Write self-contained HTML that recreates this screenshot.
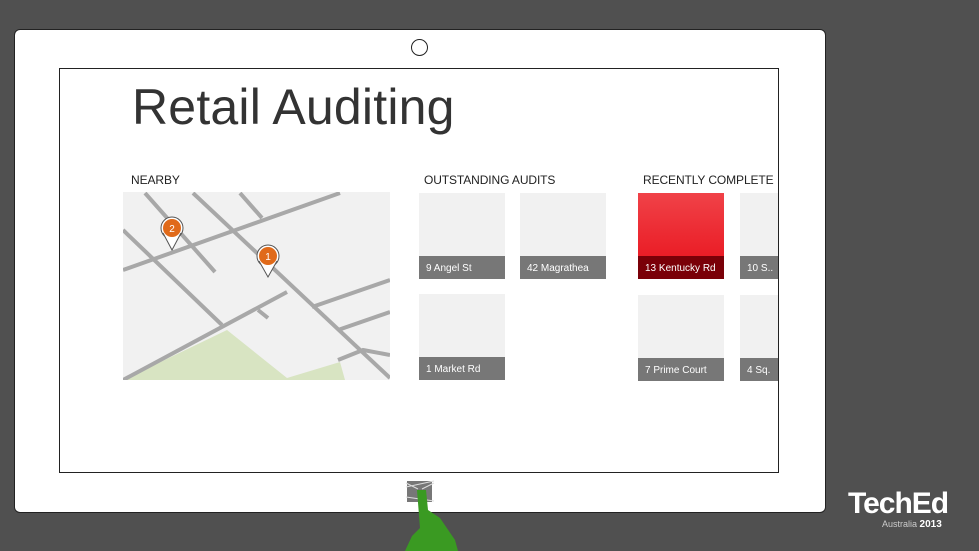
<!DOCTYPE html>
<html><head><style>
body{margin:0;width:979px;height:551px;background:#505050;position:relative;overflow:hidden;font-family:"Liberation Sans",sans-serif}
.a{position:absolute}
.tab{left:14px;top:29px;width:810px;height:482px;background:#fff;border:1px solid #222;border-radius:6px}
.scr{left:59px;top:68px;width:718px;height:403px;border:1px solid #222;background:#fff;overflow:hidden}
.h{font-size:12px;color:#222;top:173px;letter-spacing:-0.1px}
.t{background:#f1f1f1;width:86px;height:86px;overflow:hidden}
.t .l{position:absolute;left:0;bottom:0;width:100%;height:23px;background:#777;color:#fff;font-size:10px;line-height:25px;padding-left:7px;box-sizing:border-box;white-space:nowrap}
</style></head><body>
<div class="a tab"></div>
<div class="a" style="left:411px;top:39px;width:15px;height:15px;border:1px solid #222;border-radius:50%"></div>
<div class="a scr"></div>
<div class="a" style="left:132px;top:78px;font-size:50px;color:#333;letter-spacing:0.2px">Retail Auditing</div>
<div class="a h" style="left:131px">NEARBY</div>
<div class="a h" style="left:424px">OUTSTANDING AUDITS</div>
<div class="a h" style="left:643px">RECENTLY COMPLETE</div>
<svg class="a" style="left:123px;top:192px" width="267" height="188" viewBox="0 0 267 188">
<rect width="267" height="188" fill="#f1f1f1"/>
<polygon points="0,188 104,138 164,186 217,170 222,188" fill="#d8e4c2"/>
<g stroke="#a8a8a8" stroke-width="4" fill="none">
<path d="M0,78 L217,1"/><path d="M22,1 L92,80"/><path d="M70,1 L267,186"/><path d="M117,1 L139,26"/>
<path d="M0,38 L99,133"/><path d="M0,188 L164,100"/><path d="M135,118 L145,126"/>
<path d="M189,115 L267,88"/><path d="M215,138 L267,120"/><path d="M215,168 L240,158 L267,163"/>
</g>
<circle cx="49" cy="36" r="11" fill="#fff" stroke="#555"/><path d="M40,41 L49,58 L58,41" fill="#fff" stroke="#555"/>
<circle cx="49" cy="36" r="9" fill="#e06a1a"/><text x="49" y="40" font-size="10" fill="#fff" text-anchor="middle">2</text>
<circle cx="145" cy="64" r="11" fill="#fff" stroke="#555"/><path d="M136,69 L145,85 L154,69" fill="#fff" stroke="#555"/>
<circle cx="145" cy="64" r="9" fill="#e06a1a"/><text x="145" y="68" font-size="10" fill="#fff" text-anchor="middle">1</text>
</svg>
<div class="a t" style="left:419px;top:193px"><div class="l">9 Angel St</div></div>
<div class="a t" style="left:520px;top:193px"><div class="l">42 Magrathea</div></div>
<div class="a t" style="left:638px;top:193px;background:linear-gradient(#f04248,#e8101a)"><div class="l" style="background:#7a0008">13 Kentucky Rd</div></div>
<div class="a t" style="left:740px;top:193px;width:38px"><div class="l">10 S..</div></div>
<div class="a t" style="left:419px;top:294px"><div class="l">1 Market Rd</div></div>
<div class="a t" style="left:638px;top:295px"><div class="l">7 Prime Court</div></div>
<div class="a t" style="left:740px;top:295px;width:38px"><div class="l">4 Sq.</div></div>
<svg class="a" style="left:404px;top:479px" width="32" height="26"><rect x="3" y="2" width="25" height="21" fill="#777"/><path d="M2,8 L30,2 M2,18 L30,22 M2,4 L14,10 M30,4 L18,10" stroke="#ddd" stroke-width="1"/></svg>
<svg class="a" style="left:400px;top:490px" width="70" height="61"><path d="M17,0 L26,0 L28,20 L40,28 L55,50 L58,61 L5,61 L12,46 L20,38 Z" fill="#3a9a22"/></svg>
<div class="a" style="left:848px;top:487px;color:#fff;font-size:30px;font-weight:bold;letter-spacing:-1px">TechEd</div>
<div class="a" style="left:882px;top:519px;color:#ccc;font-size:9px">Australia <b style="color:#fff;font-size:10px">2013</b></div>
</body></html>
